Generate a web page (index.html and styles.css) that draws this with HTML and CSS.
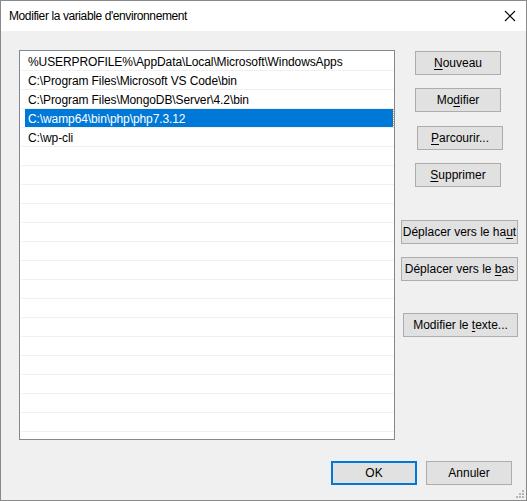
FILE: index.html
```html
<!DOCTYPE html>
<html lang="fr">
<head>
<meta charset="utf-8">
<title>Modifier la variable d'environnement</title>
<link rel="stylesheet" href="styles.css">
</head>
<body>
<div class="window">
  <div class="titlebar">
    <span class="title">Modifier la variable d'environnement</span>
    <svg class="close" width="12" height="12" viewBox="0 0 12 12"><path d="M1 1 L11 11 M11 1 L1 11" stroke="#000" stroke-width="1.1" fill="none"/></svg>
  </div>
  <div class="content">
    <div class="main">
      <div class="list">
        <div class="row">%USERPROFILE%\AppData\Local\Microsoft\WindowsApps</div>
        <div class="row">C:\Program Files\Microsoft VS Code\bin</div>
        <div class="row">C:\Program Files\MongoDB\Server\4.2\bin</div>
        <div class="row sel">C:\wamp64\bin\php\php7.3.12</div>
        <div class="row">C:\wp-cli</div>
        <div class="row"></div><div class="row"></div><div class="row"></div>
        <div class="row"></div><div class="row"></div><div class="row"></div>
        <div class="row"></div><div class="row"></div><div class="row"></div>
        <div class="row"></div><div class="row"></div><div class="row"></div>
        <div class="row"></div><div class="row"></div><div class="row"></div>
        <div class="row"></div><div class="row"></div>
      </div>
      <div class="actions">
        <button class="btn b-new"><u>N</u>ouveau</button>
        <button class="btn b-mod">Mo<u>d</u>ifier</button>
        <button class="btn b-browse"><u>P</u>arcourir...</button>
        <button class="btn b-del"><u>S</u>upprimer</button>
        <button class="btn b-up">Déplacer vers le ha<u>u</u>t</button>
        <button class="btn b-down">Déplacer vers le <u>b</u>as</button>
        <button class="btn b-edit">Modifier le <u>t</u>exte...</button>
      </div>
    </div>
    <div class="footer">
      <button class="btn b-ok">OK</button>
      <button class="btn b-cancel">Annuler</button>
    </div>
  </div>
  <svg class="grip" width="10" height="10" viewBox="0 0 10 10">
    <rect x="7" y="1" width="2" height="2" fill="#b4b4b4"/>
    <rect x="4" y="4" width="2" height="2" fill="#b4b4b4"/>
    <rect x="7" y="4" width="2" height="2" fill="#b4b4b4"/>
    <rect x="1" y="7" width="2" height="2" fill="#b4b4b4"/>
    <rect x="4" y="7" width="2" height="2" fill="#b4b4b4"/>
    <rect x="7" y="7" width="2" height="2" fill="#b4b4b4"/>
  </svg>
</div>
</body>
</html>
```

FILE: styles.css
```css
* { box-sizing: border-box; }
html, body { margin: 0; padding: 0; }
body {
  font-family: "Liberation Sans", Arial, sans-serif;
  font-size: 12px;
  color: #000;
  background: #f0f0f0;
}
.window {
  position: relative;
  width: 527px;
  height: 501px;
  border: 1px solid #8a8a8a;
  background: #f0f0f0;
  display: flex;
  flex-direction: column;
}
.titlebar {
  height: 30px;
  background: #fff;
  display: flex;
  align-items: center;
  justify-content: space-between;
  padding: 0 10px 0 8px;
  flex-shrink: 0;
}
.title { font-size: 12px; letter-spacing: -0.4px; }
.close { display: block; }
.content {
  flex: 1;
  display: flex;
  flex-direction: column;
  padding: 19px 0 0 18px;
}
.main {
  display: flex;
  align-items: flex-start;
}
.list {
  width: 376px;
  height: 390px;
  border: 1px solid #828790;
  background: #fff;
  overflow: hidden;
  padding: 1px 0 0 1px;
}
.row {
  height: 19px;
  padding-top: 2px;
  line-height: 16px;
  border-bottom: 1px solid #f0f0f0;
  padding-left: 7px;
  white-space: nowrap;
  letter-spacing: -0.1px;
}
.row.sel {
  color: #fff;
  background: linear-gradient(to right, transparent 4px, #0078d7 4px);
  border-right: 1px dotted #f2a53a;
}
.actions {
  display: flex;
  flex-direction: column;
  align-items: flex-start;
  margin-left: 6px;
  padding-top: 1px;
}
.btn {
  font-family: "Liberation Sans", Arial, sans-serif;
  font-size: 12px;
  color: #000;
  background: #e1e1e1;
  border: 1px solid #adadad;
  height: 24px;
  width: 86px;
  padding: 0;
  border-radius: 0;
}
.btn u { text-decoration-thickness: 1px; text-underline-offset: 2px; }
.b-new { margin-left: 14px; }
.b-mod { margin-left: 14px; margin-top: 13px; }
.b-browse { margin-left: 16px; margin-top: 14px; }
.b-del { margin-left: 14px; margin-top: 13px; }
.b-up { width: 117px; margin-top: 33px; }
.b-down { width: 117px; margin-top: 13px; }
.b-edit { width: 115px; margin-left: 2px; margin-top: 32px; }
.footer {
  display: flex;
  justify-content: flex-end;
  gap: 9px;
  padding-right: 14px;
  margin-top: 21px;
}
.b-ok {
  height: 24px;
  border: 2px solid #0078d7;
}
.b-cancel { height: 24px; }
.grip {
  position: absolute;
  right: 1px;
  bottom: 1px;
}
```
